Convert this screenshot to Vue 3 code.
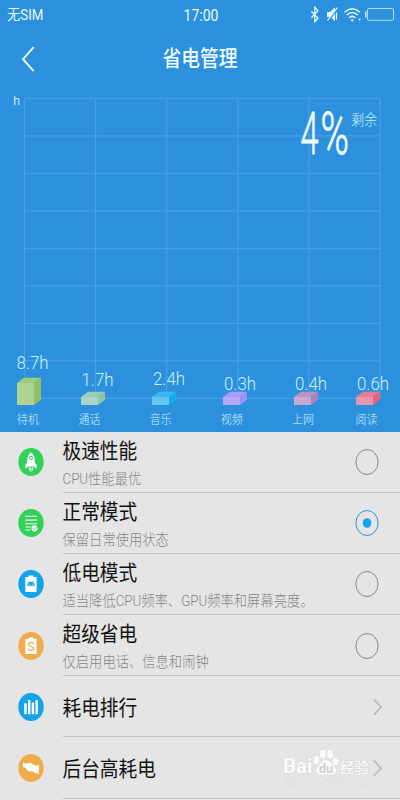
<script setup>
const gridX = [24.5, 95.5, 166.7, 237.8, 309, 380.3]
const gridY = [0, 1, 2, 3, 4, 5, 6, 7, 8].map((i) => 98.4 + i * 37.5)

const bars = [
  { name: '待机', value: '8.7h', x: 17, h: 22, valueY: 368.7, valueX: 16.5, nameX: 17, front: '#add392', top: '#9fcb81', side: '#8dc163' },
  { name: '通话', value: '1.7h', x: 81, h: 8, valueY: 386, valueX: 81.5, nameX: 78.5, front: '#a9d6c7', top: '#9bcdb9', side: '#8fc7a6' },
  { name: '音乐', value: '2.4h', x: 152, h: 8, valueY: 384.7, valueX: 153, nameX: 149.7, front: '#63c5f0', top: '#3bb9ef', side: '#12afed' },
  { name: '视频', value: '0.3h', x: 223, h: 8, valueY: 389.5, valueX: 224, nameX: 220.7, front: '#b4acf8', top: '#a69df8', side: '#9a90f8' },
  { name: '上网', value: '0.4h', x: 294, h: 8, valueY: 389.5, valueX: 295, nameX: 292, front: '#c9a8d6', top: '#b894c5', side: '#ad83b5' },
  { name: '阅读', value: '0.6h', x: 356, h: 8, valueY: 389.5, valueX: 357, nameX: 355.5, front: '#ea96b0', top: '#e67c96', side: '#e46580' },
]

const modes = [
  { icon: 'rocket', color: '#34d15a', title: '极速性能', sub: 'CPU性能最优' },
  { icon: 'list', color: '#34d15a', title: '正常模式', sub: '保留日常使用状态', on: true },
  { icon: 'android', color: '#12a3ea', title: '低电模式', sub: '适当降低CPU频率、GPU频率和屏幕亮度。' },
  { icon: 'saver', color: '#f0ab4d', title: '超级省电', sub: '仅启用电话、信息和闹钟' },
  { icon: 'rank', color: '#12a3ea', title: '耗电排行' },
  { icon: 'wave', color: '#f0ab4d', title: '后台高耗电' },
]
</script>

<template>
  <div class="screen">
    <section class="hero">
      <div class="status">
        <span class="tall carrier">无SIM</span>
        <span class="tall clock">17:00</span>
        <svg class="status-icons" width="85" height="18" viewBox="0 0 85 18">
          <path d="M1.4 5.2L8 12.2 4.8 15.600V1.200L8 4.800 1.400 11.800" fill="none" stroke="#e4fbff" stroke-width="1.300" />
          <path d="M17 6h3l5-4.700v13.600L20 11h-3z" fill="#e4fbff" />
          <path d="M18 15.500L28 1.500" stroke="#2d90dd" stroke-width="2" />
          <path d="M17.500 14.500L27.500 1.500M26.500 6.500v7" fill="none" stroke="#e4fbff" stroke-width="1.200" />
          <path d="M34.500 6.200q7.700-7 15.400 0M36.800 9q5.400-5 10.800 0M39 11.800q3.200-2.800 6.400 0" fill="none" stroke="#e4fbff" stroke-width="1.500" />
          <path d="M40.500 13.500h3.400L42.200 16zM48.400 12.600h2.400l-1.200 2.400z" fill="#e4fbff" />
          <rect x="57.500" y="2.500" width="26" height="11.800" rx="1.300" fill="none" stroke="#a5e2f7" />
          <path d="M55.800 5.500v6" stroke="#c9f3fb" stroke-width="1.400" />
        </svg>
      </div>
      <header class="bar">
        <svg class="back" width="16" height="28" viewBox="0 0 16 28">
          <path d="M13.700 2.200L3 14.200l10.700 12" fill="none" stroke="#effdff" stroke-width="1.900" />
        </svg>
        <h1 class="tall">省电管理</h1>
      </header>
      <svg class="chart" width="400" height="341" viewBox="0 91 400 341">
        <g stroke="#479fe3" stroke-width="1.200">
          <line v-for="x in gridX" :key="'x' + x" :x1="x" :x2="x" y1="98.400" y2="398.400" />
          <line v-for="y in gridY" :key="'y' + y" x1="24.500" x2="380.300" :y1="y" :y2="y" />
        </g>
        <text x="13.200" y="105" class="unit">h</text>
        <text x="300.500" y="154" class="percent" textLength="18" lengthAdjust="spacingAndGlyphs">4</text>
        <text x="320.500" y="154" class="percent" textLength="28.500" lengthAdjust="spacingAndGlyphs">%</text>
        <text transform="translate(351.300 125) scale(1 1.120)" class="left">剩余</text>
        <g v-for="b in bars" :key="b.name">
          <path :d="`M${b.x} ${405 - b.h}l7-5.2h17l-7 5.2z`" :fill="b.top" />
          <path :d="`M${b.x + 17} ${405 - b.h}l7-5.2v${b.h}l-7 5.2z`" :fill="b.side" />
          <rect :x="b.x" :y="405 - b.h" width="17" :height="b.h" :fill="b.front" />
          <text :x="b.valueX" :y="b.valueY" class="value" textLength="32" lengthAdjust="spacingAndGlyphs">{{ b.value }}</text>
          <text :transform="`translate(${b.nameX} 423.700) scale(1 1.120)`" class="name">{{ b.name }}</text>
        </g>
      </svg>
    </section>

    <ul class="list">
      <li v-for="m in modes" :key="m.title" class="row">
        <svg class="icon" width="26" height="30" viewBox="0 0 26 30">
          <ellipse cx="13" cy="15" rx="12.700" ry="14.100" :fill="m.color" />
          <g v-if="m.icon === 'rocket'">
            <path d="M13 5.200c2.600 2.200 3.800 4.800 3.700 8v2.200l1.900 2.200v4l-3.200-2h-4.800l-3.200 2v-4l1.900-2.200v-2.200c-.1-3.200 1.100-5.800 3.700-8z" fill="#fff" />
            <path d="M11.400 20.500v3M13 20.500v4M14.600 20.500v3" stroke="#fff" stroke-width="1" />
            <circle cx="13" cy="11" r="1.600" fill="none" :stroke="m.color" stroke-width="1" />
          </g>
          <g v-else-if="m.icon === 'list'">
            <path d="M7.300 8.400h11.800M7.300 12.100h11.800M7.300 15.700h11.800M7.300 19h6M7.300 22h5.200" stroke="#e6ffe9" stroke-width="1.100" />
            <ellipse cx="16.500" cy="20.300" rx="2.900" ry="3.100" fill="#fff" />
            <path d="M15 20.300l1.200 1.300 2-2.400" fill="none" :stroke="m.color" stroke-width=".9" />
          </g>
          <g v-else-if="m.icon === 'android'">
            <path d="M7.300 8h3.200V6.500h4.900V8h3.200v15H7.300z" fill="#fff" />
            <path d="M9.200 16.800c0-5.500 7.600-5.500 7.600 0z" :fill="m.color" />
            <path d="M10 11.300l1.500 2M16 11.300l-1.500 2" :stroke="m.color" stroke-width=".8" />
            <path d="M11.100 15.300h.8M14.100 15.300h.8" stroke="#fff" stroke-width=".8" />
          </g>
          <g v-else-if="m.icon === 'saver'">
            <path d="M7.300 8h3.200V6.500h4.900V8h3.200v15H7.300z" fill="#fff" />
            <path d="M15.700 13.200c-.4-2.700-5.200-2.400-5.200.1 0 2.900 5.200 1.500 5.200 4.300 0 2.600-5.100 2.600-5.500 0" fill="none" :stroke="m.color" stroke-width="1.200" />
          </g>
          <path v-else-if="m.icon === 'rank'" d="M6.200 11.300h2.500v11H6.200zM10 7.900h2.400v14.400H10zM13.700 10.500h2.400v11.800h-2.400zM17.500 7.900h2.400v14.400h-2.400z" fill="#fff" />
          <path v-else d="M5 9.300c1.500 1.300 3 1.700 5 .9 2-.8 3.300-.6 4.600.8 1.800 1.900 3.800 1.700 6.300 1.200v8.200c-2 .2-3.700-.2-5.300-1.500-2-1.500-3.200.4-5.100-.7-1.400-.8-2-2.400-3.100-3.200-1-.8-1.700-.9-2.400-.9z" fill="#fff" />
        </svg>
        <div class="body" :class="{ single: !m.sub }">
          <div class="texts">
            <span class="tall title">{{ m.title }}</span>
            <span v-if="m.sub" class="tall sub">{{ m.sub }}</span>
          </div>
          <svg v-if="m.sub" class="radio" width="24" height="28" viewBox="0 0 24 28">
            <ellipse cx="12" cy="14" rx="11.100" ry="12.500" fill="none" :stroke="m.on ? '#2795cf' : '#898989'" />
            <ellipse v-if="m.on" cx="12" cy="14" rx="4.300" ry="4.800" fill="#12a3ea" />
          </svg>
          <svg v-else class="chevron" width="12" height="20" viewBox="0 0 12 20">
            <path d="M2 2.500l7 7.700-7 7.600" fill="none" stroke="#b5b5b5" stroke-width="1.500" />
          </svg>
        </div>
      </li>
    </ul>

    <svg class="mark" width="100" height="46" viewBox="0 0 100 46">
      <g class="ink">
        <text x="2" y="31" class="mark-latin" textLength="29.500" lengthAdjust="spacingAndGlyphs">Bai</text>
        <ellipse cx="35.500" cy="18" rx="3" ry="4" />
        <ellipse cx="41.800" cy="12" rx="3.100" ry="4.200" />
        <ellipse cx="49.200" cy="12.300" rx="3.100" ry="4.200" />
        <ellipse cx="54.500" cy="19.500" rx="3" ry="4" />
        <path d="M45.300 18c4 0 5 4 8 6.500 3.500 3.200 1.500 8.300-2.800 8.300-3 0-3.700-.6-5.200-.6s-3 .6-5.500.6c-4.700 0-6.200-5.300-2.800-8.300 3-2.500 4.300-6.500 8.300-6.500z" />
        <text x="38" y="30.500" class="mark-du">du</text>
        <text x="59" y="31" class="mark-cn">经验</text>
        <text x="4" y="43" class="mark-url" textLength="84" lengthAdjust="spacingAndGlyphs">jingyan.baidu.com</text>
      </g>
    </svg>
  </div>
</template>

<style>
body {
  margin: 0;
}
</style>

<style scoped>
.screen {
  position: relative;
  width: 400px;
  height: 800px;
  overflow: hidden;
  background: #e5e5e5;
  font-family: Roboto, 'Noto Sans CJK SC', sans-serif;
}
.hero {
  height: 431.5px;
  background: #2d90dd;
  color: #effdff;
  overflow: hidden;
}
.tall {
  display: block;
  white-space: nowrap;
  transform: scaleY(1.12);
}
.status {
  display: grid;
  grid-template-columns: 1fr auto 1fr;
  align-items: center;
  height: 30px;
  padding: 0 5px 0 7px;
  color: #e4fbff;
}
.carrier,
.clock {
  line-height: 20px;
}
.carrier {
  margin-top: 2px;
  font-size: 13.3px;
}
.clock {
  font-size: 14px;
}
.status-icons {
  justify-self: end;
}
.bar {
  display: grid;
  grid-template-columns: 60px 1fr 60px;
  align-items: center;
  height: 61px;
}
.back {
  margin: -4px 0 0 20px;
}
h1 {
  margin: -3px 0 0;
  text-align: center;
  font-size: 18.8px;
  line-height: 26px;
  font-weight: 500;
}
.chart {
  display: block;
}
.chart text {
  fill: #c9f3fb;
}
.chart .unit {
  font-family: 'Liberation Sans', sans-serif;
  font-size: 12px;
}
.chart .percent {
  font-size: 59.5px;
  fill: #effdff;
  font-weight: 300;
  stroke: #effdff;
  stroke-width: 0.8;
}
.chart .left {
  font-size: 13px;
  font-weight: 300;
}
.chart .value {
  font-size: 19px;
  font-weight: 300;
}
.chart .name {
  font-size: 11px;
  font-weight: 300;
}
.list {
  margin: 0;
  padding: 0;
  list-style: none;
}
.row {
  display: flex;
  height: 61.2px;
  padding-left: 18px;
}
.icon {
  flex: none;
  margin-top: 15.5px;
}
.body {
  flex: 1;
  display: flex;
  justify-content: space-between;
  box-sizing: border-box;
  height: 61.2px;
  margin-left: 18.5px;
  border-bottom: 1px solid #c4c4c4;
}
.texts {
  display: flex;
  flex-direction: column;
}
.title {
  margin-top: 6px;
  font-size: 18.7px;
  line-height: 26px;
  color: #111;
}
.single .title {
  margin-top: 19px;
}
.sub {
  margin-top: 6px;
  font-size: 13.3px;
  line-height: 20px;
  color: #858585;
  font-weight: 300;
}
.radio {
  flex: none;
  margin: 16.5px 21.5px 0 0;
}
.chevron {
  flex: none;
  margin: 20.5px 16px 0 0;
}
.mark {
  position: absolute;
  left: 281px;
  top: 742px;
}
.ink {
  fill: #fbfbfb;
  stroke: #d2d2d2;
  stroke-width: 0.8;
  paint-order: stroke;
}
.mark-latin {
  font-size: 19.5px;
  font-weight: 700;
}
.mark-du {
  font-size: 12.5px;
  font-weight: 700;
  fill: #cfcfcf;
  stroke: none;
}
.mark-cn {
  font-size: 14.5px;
  font-weight: 500;
}
.mark-url {
  font-size: 10.5px;
  fill: #efefef;
  stroke: #d8d8d8;
}
</style>
